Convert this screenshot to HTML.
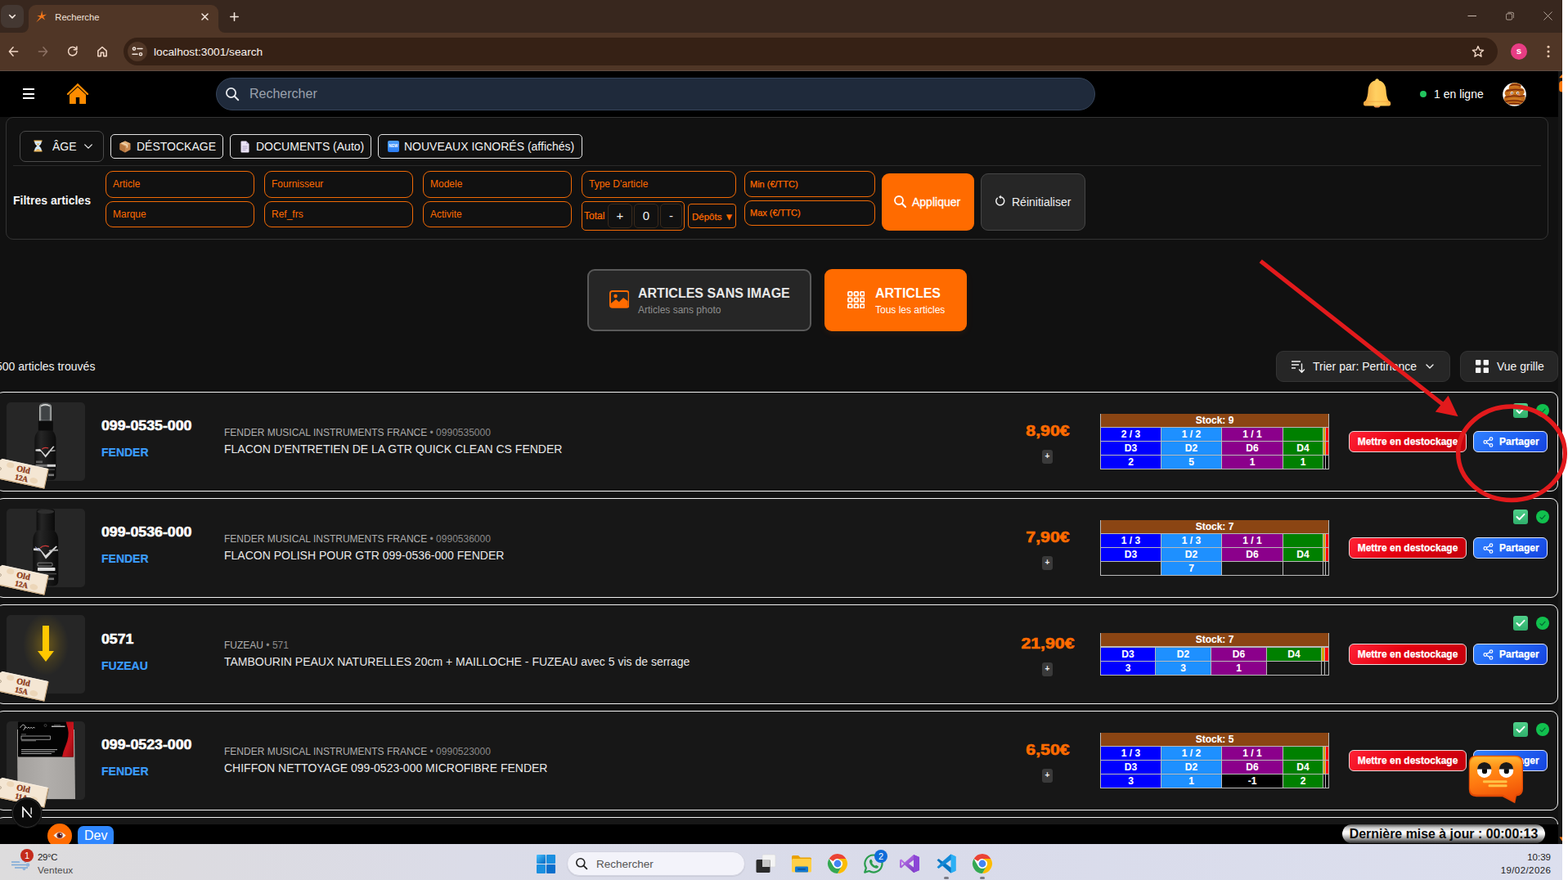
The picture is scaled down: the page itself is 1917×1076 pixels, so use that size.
<!DOCTYPE html>
<html lang="fr">
<head>
<meta charset="utf-8">
<title>Recherche</title>
<style>
*{box-sizing:border-box;margin:0;padding:0}
html,body{width:1917px;height:1076px;overflow:hidden;background:#fff}
body{font-family:"Liberation Sans",sans-serif;color:#fff;position:relative;-webkit-font-smoothing:antialiased}
.abs,.abs *{position:absolute}
#root{position:absolute;left:0;top:0;width:1917px;height:1076px;overflow:hidden}
#root div,#root span,#root svg{position:absolute;white-space:nowrap}
.t{line-height:1;}
/* chrome */
#tabstrip{left:0;top:0;width:1910px;height:40px;background:#38271e}
#toolbar{left:0;top:40px;width:1910px;height:47px;background:#503626}
#tab{left:35px;top:6px;width:232px;height:34px;background:#503626;border-radius:9px 9px 0 0}
#tabsearch{left:1px;top:6px;width:28px;height:28px;border-radius:8px;background:#443832}
#urlpill{left:151px;top:46px;width:1680px;height:34px;border-radius:17px;background:#362115}
#siteinfo{left:156px;top:51px;width:24px;height:24px;border-radius:12px;background:#503626}
/* page */
#page{left:0;top:87px;width:1905px;height:945px;background:#111}
#sbar{left:1905px;top:87px;width:5px;height:945px;background:#171717}
#hdr{left:0;top:87px;width:1905px;height:56px;background:#000}
#search{left:264px;top:95px;width:1075px;height:40px;border-radius:20px;background:#1f2a3b;border:1px solid #36445a}
#fpanel{left:7px;top:143px;width:1886px;height:150px;border:1px solid #343434;border-radius:9px;background:#111}
.chip{height:30px;top:164px;border:1px solid #e4e4e4;border-radius:5px;font-size:14px;color:#f2f2f2}
.fin{height:33px;border:1px solid #f26a05;border-radius:9px;font-size:12px;color:#ff6b00}
.fin span{left:8px;top:9px}
.card{left:-2px;width:1907px;height:122px;border:1px solid #f2f2f2;border-radius:9px;background:#171717}
.thumb{left:9px;top:12px;width:96px;height:96px;border-radius:5px;background:#262626;overflow:hidden}
.ref{left:125px;font-size:16px;font-weight:bold;color:#fff;-webkit-text-stroke:0.55px #fff;transform:scaleX(1.108);transform-origin:0 50%}
.brand{left:125px;font-size:14px;font-weight:bold;color:#3b9dff;-webkit-text-stroke:0.2px #3b9dff}
.sup{left:275px;font-size:12px;color:#b0b0b0}
.sup i{font-style:normal;color:#8a8a8a}
.desc{left:275px;font-size:14px;color:#e8e8e8}
.price{font-size:18px;font-weight:bold;color:#ff6b00;-webkit-text-stroke:0.6px #ff6b00;text-align:center;width:80px;transform:scaleX(1.183);transform-origin:50% 50%}
.plus{left:1275px;width:13px;height:17px;border-radius:3px;background:#3a3a3a;color:#eee;font-size:10px;font-weight:bold;text-align:center;line-height:15px}
.btnr{left:1650px;top:47px;width:144px;height:26px;border:1px solid #f0dada;border-radius:6px;background:linear-gradient(135deg,#ff2236 0%,#e4000f 45%,#c4000d 100%);font-size:12px;font-weight:bold;color:#fff;text-align:center;line-height:24px;-webkit-text-stroke:0.25px #fff}
.btnb{left:1802px;top:47px;width:91px;height:26px;border:1px solid #dfe6ff;border-radius:6px;background:linear-gradient(135deg,#2f80ff 0%,#2163f2 50%,#1544e0 100%);font-size:12px;font-weight:bold;color:#fff;-webkit-text-stroke:0.25px #fff}
.stk{left:1346px;width:281px;background:#b9b9b9}
.stk div{font-size:12px;font-weight:bold;color:#fff;text-align:center;line-height:16px;height:16px;-webkit-text-stroke:0.1px #fff}
.stk div.sh{height:16px;line-height:17px}
.cb{left:1852px;top:13px;width:18px;height:18px;border-radius:3px;background:linear-gradient(180deg,#4fd08a,#2fae6b)}
.ck{left:1880px;top:14px;width:16px;height:16px;border-radius:8px;background:#11c04e}
.tag{width:64px;height:25px;background:linear-gradient(180deg,#f6e9d8,#f1e1cb);border:1px solid #f4e6d2;border-right:1px solid #cdb08a;border-bottom:1.5px solid #c9a87e;border-radius:1.5px;transform:rotate(12deg);font-family:"Liberation Serif","DejaVu Serif",serif;font-weight:bold;font-size:10px;color:#8c3a1a;-webkit-text-stroke:0.35px #8c3a1a;box-shadow:0 2px 3px rgba(0,0,0,.45)}
/* taskbar */
#taskbar{left:0;top:1032px;width:1910px;height:44px;background:linear-gradient(90deg,#dddcdd 0%,#dcdbe0 12%,#dbdce8 30%,#d9dbea 60%,#dcdfee 100%)}
#taskbar .tx{font-family:"Liberation Sans",sans-serif;color:#1b1b1b}
</style>
</head>
<body>
<div id="root">
<!-- browser chrome -->
<div id="tabstrip"></div>
<div id="toolbar"></div>
<div style="left:0;top:86px;width:1910px;height:1px;background:#5e4c42"></div>
<div id="tabsearch"></div>
<svg style="left:10px;top:15.5px" width="10" height="8.4" viewBox="0 0 12 10"><path d="M2 3 L6 7 L10 3" fill="none" stroke="#f3e6dd" stroke-width="2" stroke-linecap="round" stroke-linejoin="round"/></svg>
<div id="tab"></div>
<svg style="left:27px;top:32px" width="8" height="8" viewBox="0 0 8 8"><path d="M8 0 V8 H0 A8 8 0 0 0 8 0 Z" fill="#503626"/></svg>
<svg style="left:267px;top:32px" width="8" height="8" viewBox="0 0 8 8"><path d="M0 0 V8 H8 A8 8 0 0 1 0 0 Z" fill="#503626"/></svg>
<svg style="left:42px;top:12px" width="17" height="17" viewBox="0 0 17 17"><path d="M9.3 0.8 L10.2 6.6 L15.2 5.6 L11 8.6 L13.2 12.4 L9 9.8 L2 15.6 L7 9 L3.2 7 L7.8 7 Z" fill="#f2761a"/></svg>
<span class="t" style="left:67.3px;top:15.5px;font-size:11.2px;color:#f3e4da">Recherche</span>
<svg style="left:246px;top:16px" width="9" height="9" viewBox="0 0 9 9"><path d="M1 1 L8 8 M8 1 L1 8" stroke="#f3e6dd" stroke-width="1.5" stroke-linecap="round"/></svg>
<svg style="left:281px;top:15px" width="11" height="11" viewBox="0 0 11 11"><path d="M5.5 0.8 V10.2 M0.8 5.5 H10.2" stroke="#f3e6dd" stroke-width="1.6" stroke-linecap="round"/></svg>
<!-- window controls -->
<svg style="left:1794px;top:17.8px" width="12" height="3" viewBox="0 0 12 3"><path d="M0.5 1.5 H11" stroke="#c9b9ae" stroke-width="1"/></svg>
<svg style="left:1840.5px;top:14px" width="10.5" height="10.5" viewBox="0 0 13 13"><rect x="0.5" y="3.5" width="9" height="9" rx="2" fill="none" stroke="#c9b9ae" stroke-width="1"/><path d="M3 1.5 H9.5 A2.5 2.5 0 0 1 12 4 V10" fill="none" stroke="#c9b9ae" stroke-width="1"/></svg>
<svg style="left:1886.5px;top:14.3px" width="11" height="11" viewBox="0 0 13 13"><path d="M0.5 0.5 L12.5 12.5 M12.5 0.5 L0.5 12.5" stroke="#c9b9ae" stroke-width="1"/></svg>
<!-- nav buttons -->
<svg style="left:10.3px;top:57px" width="13" height="12" viewBox="0 0 15 14"><path d="M7 1 L1.5 7 L7 13 M1.5 7 H13.5" fill="none" stroke="#f0d6c5" stroke-width="1.7" stroke-linecap="round" stroke-linejoin="round"/></svg>
<svg style="left:46.2px;top:57px" width="13" height="12" viewBox="0 0 15 14"><path d="M8 1 L13.5 7 L8 13 M13.5 7 H1.5" fill="none" stroke="#8d7264" stroke-width="1.7" stroke-linecap="round" stroke-linejoin="round"/></svg>
<svg style="left:82px;top:56.3px" width="13.5" height="13.5" viewBox="0 0 15 15"><path d="M12.6 4.6 A5.8 5.8 0 1 0 13.3 7.5" fill="none" stroke="#f0d6c5" stroke-width="1.7" stroke-linecap="round"/><path d="M13.2 1.2 V5.2 H9.2" fill="none" stroke="#f0d6c5" stroke-width="1.7" stroke-linecap="round" stroke-linejoin="round"/></svg>
<svg style="left:117.6px;top:55.6px" width="14" height="14" viewBox="0 0 15 15"><path d="M2 6.5 L7.5 1.6 L13 6.5 V13.5 H9.3 V9 H5.7 V13.5 H2 Z" fill="none" stroke="#f0d6c5" stroke-width="1.7" stroke-linejoin="round"/></svg>
<div id="urlpill"></div>
<div id="siteinfo"></div>
<svg style="left:161px;top:57px" width="14" height="12" viewBox="0 0 14 12"><circle cx="3" cy="2.6" r="1.6" fill="none" stroke="#f3e6dd" stroke-width="1.4"/><path d="M7 2.6 H13" stroke="#f3e6dd" stroke-width="1.5" stroke-linecap="round"/><circle cx="11" cy="9.2" r="1.6" fill="none" stroke="#f3e6dd" stroke-width="1.4"/><path d="M1 9.2 H7" stroke="#f3e6dd" stroke-width="1.5" stroke-linecap="round"/></svg>
<span class="t" style="left:188px;top:56.5px;font-size:13.7px;color:#fbf3ee">localhost:3001/search</span>
<svg style="left:1799px;top:55px" width="16" height="16" viewBox="0 0 16 16"><path d="M8 1.6 L9.9 6 L14.6 6.4 L11 9.5 L12.1 14.1 L8 11.6 L3.9 14.1 L5 9.5 L1.4 6.4 L6.1 6 Z" fill="none" stroke="#f0d6c5" stroke-width="1.4" stroke-linejoin="round"/></svg>
<div style="left:1847px;top:53px;width:20px;height:20px;border-radius:10px;background:#e83d84"></div>
<span class="t" style="left:1847px;top:56.5px;width:20px;text-align:center;font-size:11.5px;font-weight:bold;color:#fff">s</span>
<svg style="left:1891px;top:55px" width="4" height="16" viewBox="0 0 4 16"><circle cx="2" cy="2.3" r="1.5" fill="#f0cbb3"/><circle cx="2" cy="8" r="1.5" fill="#f0cbb3"/><circle cx="2" cy="13.7" r="1.5" fill="#f0cbb3"/></svg>
<!-- page -->
<div id="page"></div>
<div id="sbar"></div>
<div id="hdr"></div>
<!-- hamburger -->
<div style="left:28px;top:108px;width:14px;height:2px;background:#fff"></div>
<div style="left:28px;top:114px;width:14px;height:2px;background:#fff"></div>
<div style="left:28px;top:119px;width:14px;height:2px;background:#fff"></div>
<!-- home -->
<svg style="left:81px;top:100px" width="28" height="28" viewBox="0 0 28 28"><path d="M14 3.5 L2 15" stroke="#ff8c00" stroke-width="2.4" stroke-linecap="round" fill="none"/><path d="M14 3.5 L26 15" stroke="#ff8c00" stroke-width="2.4" stroke-linecap="round" fill="none"/><path d="M14 6.5 L24 15.8 V27 H16.2 V19 H11.8 V27 H4 V15.8 Z" fill="#ff8c00"/></svg>
<div id="search"></div>
<svg style="left:275px;top:106px" width="18" height="18" viewBox="0 0 18 18"><circle cx="7.5" cy="7.5" r="5.6" fill="none" stroke="#e5e7eb" stroke-width="1.8"/><path d="M11.8 11.8 L16.2 16.2" stroke="#e5e7eb" stroke-width="2" stroke-linecap="round"/></svg>
<span class="t" style="left:305px;top:107px;font-size:16px;color:#9aa1ad">Rechercher</span>
<!-- bell -->
<svg style="left:1665px;top:95px" width="38" height="40" viewBox="0 0 38 40"><defs><linearGradient id="bg1" x1="0" y1="0" x2="1" y2="0"><stop offset="0" stop-color="#f2a640"/><stop offset="0.45" stop-color="#ffd062"/><stop offset="0.8" stop-color="#ffc653"/><stop offset="1" stop-color="#f4ab45"/></linearGradient></defs><ellipse cx="18.5" cy="34" rx="4" ry="2.6" fill="#e8914a"/><path d="M18.6 1.2 C20 1.2 20.8 2.2 20.9 3.4 C26.5 4.6 29.3 9.5 29.6 15.5 C29.8 20.5 30.6 24.5 32.5 28 C33.2 28.5 35.2 29.2 35.2 31 V32.6 C35.2 33.8 34.4 34.4 33.2 34.4 H4 C2.8 34.4 2 33.8 2 32.6 V31 C2 29.2 4 28.5 4.7 28 C6.6 24.5 7.4 20.5 7.6 15.5 C7.9 9.5 10.7 4.6 16.3 3.4 C16.4 2.2 17.2 1.2 18.6 1.2 Z" fill="url(#bg1)"/><path d="M4.2 29.2 H33 " stroke="#eea03c" stroke-width="1" opacity=".7" fill="none"/></svg>
<div style="left:1736px;top:111px;width:8px;height:8px;border-radius:4px;background:#22c55e"></div>
<span class="t" style="left:1753px;top:108px;font-size:14px;color:#fff">1 en ligne</span>
<!-- avatar -->
<svg style="left:1836.5px;top:100.5px" width="29" height="29" viewBox="0 0 29 29"><defs><clipPath id="avc"><circle cx="14.5" cy="14.5" r="14.2"/></clipPath></defs><circle cx="14.5" cy="14.5" r="14.3" fill="#fff"/><g clip-path="url(#avc)"><path d="M9.5 2.5 Q14 -1.5 20.5 1.2 Q24 3.2 22 6.2 Q27 7.5 26.8 11.5 Q26.8 13.6 25 14.6 Q28.6 17 27.6 21 Q26.6 25 21.5 26.4 Q14 28.2 7 26 Q1.8 24.200000000000003 1.6 20.5 Q1.5 17.5 4 16 Q1.6 13.5 3.2 10.5 Q4.6 8 8 7.6 Q6.8 4.6 9.5 2.5 Z" fill="#c06a18"/><path d="M10 3.5 Q15 1.6 21.5 3.8 M5 10.2 Q12 7.4 24.5 9.2 M4 17.8 Q11 15.6 18 16.5 Q23 17 26.8 16 M3.2 23.2 Q12 20.6 25.5 23.4 M8 26 Q14 25 21 26.3" stroke="#7c2a0a" stroke-width="1.5" fill="none" stroke-linecap="round"/><path d="M9 5.5 Q14 4.4 19 5.4 M7 13 Q13 11.6 21 12.6 M7 20.5 Q14 19 22 20.4" stroke="#d98a2e" stroke-width="1.2" fill="none" stroke-linecap="round" opacity=".8"/><circle cx="11.4" cy="12.8" r="1.7" fill="#fff"/><circle cx="18.6" cy="12.8" r="1.7" fill="#fff"/><circle cx="11.6" cy="12.9" r="0.8" fill="#3a1a10"/><circle cx="18.8" cy="12.9" r="0.8" fill="#3a1a10"/><ellipse cx="9.6" cy="15" rx="1.3" ry="0.8" fill="#f08a8a"/><ellipse cx="20.4" cy="15" rx="1.3" ry="0.8" fill="#f08a8a"/></g></svg>
<!-- scrollbar arrows -->
<svg style="left:1905px;top:90px" width="5" height="24" viewBox="0 0 5 24"><path d="M5 1 L2.5 3.5 L1.2 5.2 H5 Z" fill="#ff7a0a"/><path d="M5 9 Q1 9 1.2 13 V19 Q1 22.5 5 22.5 Z" fill="#ff7a0a"/></svg>
<svg style="left:1905px;top:1022px" width="5" height="8" viewBox="0 0 5 8"><path d="M1.5 1.5 H5 V6.5 Z" fill="#ff7a0a"/></svg>
<!-- filter panel -->
<div id="fpanel"></div>
<div style="left:24px;top:160px;width:103px;height:38px;border:1px solid #4a4a4a;border-radius:7px"></div>
<svg style="left:41px;top:171px" width="11" height="15" viewBox="0 0 11 15"><path d="M0.5 0.5 H10.5 V2.2 H0.5 Z M0.5 12.8 H10.5 V14.5 H0.5 Z" fill="#e9b24e"/><path d="M1.5 2 H9.500000000000002 Q9.500000000000002 5.5 6.3 7.5 Q9.500000000000002 9.5 9.500000000000002 13 H1.5 Q1.5 9.5 4.7 7.5 Q1.5 5.5 1.5 2 Z" fill="#cfe9ff" stroke="#eee" stroke-width="0.6"/><path d="M2.6 13 Q5.5 9.5 8.4 13 Z M3.5 4.5 H7.5 L5.5 6.8 Z" fill="#e9a53a"/></svg>
<span class="t" style="left:64px;top:172px;font-size:14px;color:#f4f4f4">ÂGE</span>
<svg style="left:102px;top:175px" width="12" height="8" viewBox="0 0 14 9"><path d="M2 2 L7 7 L12 2" fill="none" stroke="#f1f1f1" stroke-width="1.5" stroke-linecap="round" stroke-linejoin="round"/></svg>
<div class="chip" style="left:135px;width:138px"></div>
<svg style="left:146px;top:172px" width="14" height="15" viewBox="0 0 14 15"><path d="M7 0.5 L13.5 3.5 V11 L7 14.5 L0.5 11 V3.5 Z" fill="#c98a52"/><path d="M7 0.5 L13.5 3.5 L7 6.8 L0.5 3.5 Z" fill="#e2b07a"/><path d="M7 6.8 V14.5 L0.5 11 V3.5 Z" fill="#b5763f"/><path d="M3.6 2 L10.2 5.2 V8.3 L8.6 9 V5.9 L2.2 2.7 Z" fill="#f0d9b8"/></svg>
<span class="t" style="left:167px;top:172px;font-size:14px;color:#f2f2f2">DÉSTOCKAGE</span>
<div class="chip" style="left:281px;width:173px"></div>
<svg style="left:294px;top:172px" width="11" height="15" viewBox="0 0 11 15"><path d="M0.5 1.5 Q0.5 0.5 1.5 0.5 H7 L10.5 4 V13.5 Q10.5 14.5 9.5 14.5 H1.5 Q0.5 14.5 0.5 13.5 Z" fill="#e9e2f5"/><path d="M7 0.5 L10.5 4 H7 Z" fill="#b9aed0"/><path d="M2.5 7 H8.5 M2.5 9.2 H8.5 M2.5 11.4 H6.5" stroke="#a89cc0" stroke-width="0.9"/></svg>
<span class="t" style="left:313px;top:172px;font-size:14px;color:#f2f2f2">DOCUMENTS (Auto)</span>
<div class="chip" style="left:462px;width:250px"></div>
<div style="left:474px;top:172px;width:14px;height:14px;border-radius:2px;background:linear-gradient(180deg,#4fa0ff,#2a7bf0)"></div>
<span class="t" style="left:474px;top:176.5px;width:14px;text-align:center;font-size:4.6px;font-weight:bold;color:#fff;letter-spacing:0.1px">NEW</span>
<span class="t" style="left:494px;top:172px;font-size:14px;color:#f2f2f2">NOUVEAUX IGNORÉS (affichés)</span>
<div style="left:16px;top:202px;width:1868px;height:1px;background:#2a2a2a"></div>
<span class="t" style="left:16px;top:238px;font-size:14px;font-weight:bold;color:#f5f5f5">Filtres articles</span>
<div class="fin" style="left:129px;top:209px;width:182px"><span class="t">Article</span></div>
<div class="fin" style="left:129px;top:246px;width:182px;height:32px"><span class="t">Marque</span></div>
<div class="fin" style="left:323px;top:209px;width:182px"><span class="t">Fournisseur</span></div>
<div class="fin" style="left:323px;top:246px;width:182px;height:32px"><span class="t">Ref_frs</span></div>
<div class="fin" style="left:517px;top:209px;width:182px"><span class="t">Modele</span></div>
<div class="fin" style="left:517px;top:246px;width:182px;height:32px"><span class="t">Activite</span></div>
<div class="fin" style="left:711px;top:209px;width:189px"><span class="t">Type D'article</span></div>
<div class="fin" style="left:711px;top:246px;width:126px;height:36px;border-radius:5px"><span class="t" style="left:2px;top:11px;-webkit-text-stroke:0.2px #ff6b00">Total</span></div>
<div style="left:743px;top:249px;width:30px;height:30px;border:1px solid #3a2a1c;border-radius:5px"></div>
<div style="left:775px;top:249px;width:30px;height:30px;border:1px solid #3a2a1c;border-radius:5px"></div>
<div style="left:807px;top:249px;width:27px;height:30px;border:1px solid #3a2a1c;border-radius:5px"></div>
<span class="t" style="left:743px;top:256px;width:30px;text-align:center;font-size:15px;color:#f0f0f0">+</span>
<span class="t" style="left:775px;top:256px;width:30px;text-align:center;font-size:15px;color:#f0f0f0">0</span>
<span class="t" style="left:807px;top:256px;width:27px;text-align:center;font-size:15px;color:#f0f0f0">-</span>
<div class="fin" style="left:841px;top:249px;width:59px;height:30px;border-radius:4px"><span class="t" style="left:4px;top:10px;font-size:11.5px;-webkit-text-stroke:0.25px #ff6b00">Dépôts ▼</span></div>
<div class="fin" style="left:910px;top:209px;width:160px;height:32px"><span class="t" style="left:6px;top:10px;font-size:11px;-webkit-text-stroke:0.25px #ff6b00">Min (€/TTC)</span></div>
<div class="fin" style="left:910px;top:245px;width:160px;height:31px"><span class="t" style="left:6px;top:9px;font-size:11px;-webkit-text-stroke:0.25px #ff6b00">Max (€/TTC)</span></div>
<div style="left:1078px;top:212px;width:113px;height:70px;border-radius:9px;background:#ff6b00"></div>
<svg style="left:1092px;top:238px" width="17" height="17" viewBox="0 0 17 17"><circle cx="7" cy="7" r="5" fill="none" stroke="#fff" stroke-width="1.8"/><path d="M10.8 10.8 L15 15" stroke="#fff" stroke-width="2" stroke-linecap="round"/></svg>
<span class="t" style="left:1115px;top:240px;font-size:14px;color:#fff;-webkit-text-stroke:0.3px #fff">Appliquer</span>
<div style="left:1199px;top:212px;width:128px;height:70px;border-radius:9px;background:#262626;border:1px solid #474747"></div>
<svg style="left:1215px;top:238px" width="16" height="16" viewBox="0 0 16 16"><path d="M4.3 4.2 A5 5 0 1 0 8 2.8" fill="none" stroke="#f0f0f0" stroke-width="1.5" stroke-linecap="round"/><path d="M8.6 0.6 L6 3 L8.8 5.2 Z" fill="#f0f0f0"/></svg>
<span class="t" style="left:1237px;top:240px;font-size:14px;color:#f0f0f0">Réinitialiser</span>
<!-- tabs -->
<div style="left:718px;top:329px;width:274px;height:76px;border-radius:9px;background:#262626;border:2px solid #5a5a5a"></div>
<svg style="left:744.6px;top:355.4px" width="24.6" height="21.8" viewBox="0 0 26 23"><rect x="1" y="1" width="24" height="21" rx="3" fill="none" stroke="#ff6b00" stroke-width="2"/><circle cx="8" cy="7.5" r="2.4" fill="#ff6b00"/><path d="M2 17 L8.5 11.5 L12.5 15 L18 9.5 L24 14 V21 H2 Z" fill="#ff6b00"/></svg>
<span class="t" style="left:780px;top:351px;font-size:16px;font-weight:bold;color:#e8e8e8">ARTICLES SANS IMAGE</span>
<span class="t" style="left:780px;top:373px;font-size:12px;color:#8e8e8e">Articles sans photo</span>
<div style="left:1008px;top:329px;width:174px;height:76px;border-radius:9px;background:#ff6b00;box-shadow:0 3px 8px rgba(255,107,0,.08)"></div>
<svg style="left:1035.6px;top:355.6px" width="21.6" height="21.6" viewBox="0 0 23 23"><g fill="none" stroke="#fff" stroke-width="1.9"><rect x="1" y="1" width="5" height="5" rx="1"/><rect x="9" y="1" width="5" height="5" rx="1"/><rect x="17" y="1" width="5" height="5" rx="1"/><rect x="1" y="9" width="5" height="5" rx="1"/><rect x="9" y="9" width="5" height="5" rx="1"/><rect x="17" y="9" width="5" height="5" rx="1"/><rect x="1" y="17" width="5" height="5" rx="1"/><rect x="9" y="17" width="5" height="5" rx="1"/><rect x="17" y="17" width="5" height="5" rx="1"/></g></svg>
<span class="t" style="left:1070px;top:351px;font-size:16px;font-weight:bold;color:#fff">ARTICLES</span>
<span class="t" style="left:1070px;top:373px;font-size:12px;color:#fff">Tous les articles</span>
<!-- list header -->
<span class="t" style="left:-5px;top:441px;font-size:14px;color:#f0f0f0">500 articles trouvés</span>
<div style="left:1560px;top:429px;width:213px;height:38px;border-radius:9px;background:#262626;border:1px solid #343434"></div>
<svg style="left:1578px;top:440px" width="18" height="17" viewBox="0 0 18 17"><path d="M1 2 H12 M1 6 H10 M1 10 H6" stroke="#f0f0f0" stroke-width="1.4" fill="none"/><path d="M13.5 5 V15 M10.5 12 L13.5 15.2 L16.5 12" stroke="#f0f0f0" stroke-width="1.4" fill="none" stroke-linecap="round" stroke-linejoin="round"/></svg>
<span class="t" style="left:1605px;top:441px;font-size:14px;color:#f4f4f4">Trier par: Pertinence</span>
<svg style="left:1742px;top:444px" width="12" height="8" viewBox="0 0 12 8"><path d="M2 2 L6 6 L10 2" fill="none" stroke="#f0f0f0" stroke-width="1.4" stroke-linecap="round" stroke-linejoin="round"/></svg>
<div style="left:1785px;top:429px;width:120px;height:38px;border-radius:9px;background:#262626;border:1px solid #343434"></div>
<svg style="left:1804px;top:440px" width="16" height="16" viewBox="0 0 16 16"><rect x="0" y="0" width="6.4" height="6.4" rx="0.8" fill="#f4f4f4"/><rect x="9.6" y="0" width="6.4" height="6.4" rx="0.8" fill="#f4f4f4"/><rect x="0" y="9.6" width="6.4" height="6.4" rx="0.8" fill="#f4f4f4"/><rect x="9.6" y="9.6" width="6.4" height="6.4" rx="0.8" fill="#f4f4f4"/></svg>
<span class="t" style="left:1830px;top:441px;font-size:14px;color:#f4f4f4">Vue grille</span>
<!-- cards -->
<div class="card" style="top:479px;left:-5px;width:1910px">
<div class="thumb" style="left:12px;top:12px"><svg style="left:0;top:0" width="96" height="96" viewBox="0 0 96 96"><defs><linearGradient id="bt1" x1="0" x2="1"><stop offset="0" stop-color="#101010"/><stop offset="0.3" stop-color="#262626"/><stop offset="0.6" stop-color="#1a1a1a"/><stop offset="1" stop-color="#0b0b0b"/></linearGradient><linearGradient id="cp1" x1="0" x2="1"><stop offset="0" stop-color="#c9cbc7"/><stop offset="0.18" stop-color="#5d6163"/><stop offset="0.8" stop-color="#54585a"/><stop offset="1" stop-color="#b9bbb8"/></linearGradient></defs><path d="M40 6 Q40 0.5 47.5 0.5 Q55 0.5 55 6 V23 H40 Z" fill="url(#cp1)"/><path d="M42 4.5 Q47.5 1 53 4.5" stroke="#e4e5e2" stroke-width="1.3" fill="none"/><rect x="42.5" y="5" width="10" height="16" rx="1.5" fill="#3f4345"/><rect x="38.8" y="22.5" width="18" height="12.5" rx="1" fill="#0c0c0c"/><path d="M39 34.5 Q34.3 39 34.3 46 V90 Q34.3 95 40 95 H55 Q60.5 95 60.5 90 V46 Q60.5 39 56 34.5 Z" fill="url(#bt1)"/><path d="M35.5 57.5 L41 57 L47.5 64.5 L57 53.5 L58.5 54 L47.7 67.5 L42 60 L35.5 59.5 Z" fill="#d8d8d8"/><path d="M52 59 L59.5 58.2 L59.5 59.6 L51 60.2 Z" fill="#bdbdbd"/><path d="M43.2 57.3 q3 -3.2 8 -1.2" stroke="#d23a3a" stroke-width="1.1" fill="none"/><rect x="36" y="71.5" width="8" height="2.6" fill="#6d6d6d" opacity=".8"/><rect x="35.5" y="75.8" width="14" height="3" fill="#6f6f6f"/><rect x="49.5" y="75.8" width="10.5" height="3" fill="#cfcfcf"/><rect x="44" y="81.5" width="15" height="1.4" fill="#4a4a4a"/><rect x="51" y="87.5" width="7" height="2.6" fill="#777"/></svg></div>
<span class="t ref" style="left:128px;top:33px">099-0535-000</span>
<span class="t brand" style="left:128px;top:66px">FENDER</span>
<span class="t sup" style="left:278px;top:43px">FENDER MUSICAL INSTRUMENTS FRANCE <i>• 0990535000</i></span>
<span class="t desc" style="left:278px;top:62px">FLACON D'ENTRETIEN DE LA GTR QUICK CLEAN CS FENDER</span>
<span class="t price" style="left:1245px;top:38px">8,90€</span>
<div class="plus" style="left:1278px;top:70px">+</div>
<div class="stk" style="left:1349px;top:26px;width:280px;height:68px">
<div class="sh" style="left:1px;top:0;width:278px;background:#8b4513">Stock: 9</div>
<div style="left:1px;top:17px;width:73px;background:#0000ff">2 / 3</div>
<div style="left:75px;top:17px;width:73px;background:#1e90ff">1 / 2</div>
<div style="left:149px;top:17px;width:74px;background:#8b008b">1 / 1</div>
<div style="left:224px;top:17px;width:48px;background:#008000"></div>
<div style="left:273px;top:17px;width:2px;background:#cfa900"></div>
<div style="left:276px;top:17px;width:3px;background:#ff0000"></div>
<div style="left:1px;top:34px;width:73px;background:#0000ff">D3</div>
<div style="left:75px;top:34px;width:73px;background:#1e90ff">D2</div>
<div style="left:149px;top:34px;width:74px;background:#8b008b">D6</div>
<div style="left:224px;top:34px;width:48px;background:#008000">D4</div>
<div style="left:273px;top:34px;width:2px;background:#cfa900"></div>
<div style="left:276px;top:34px;width:3px;background:#ff0000"></div>
<div style="left:1px;top:51px;width:73px;background:#0000ff">2</div>
<div style="left:75px;top:51px;width:73px;background:#1e90ff">5</div>
<div style="left:149px;top:51px;width:74px;background:#8b008b">1</div>
<div style="left:224px;top:51px;width:48px;background:#008000">1</div>
<div style="left:273px;top:51px;width:2px;background:#000000"></div>
<div style="left:276px;top:51px;width:3px;background:#000000"></div>
</div>
<div class="btnr" style="left:1653px">Mettre en destockage</div>
<div class="btnb" style="left:1805px"><svg style="left:11px;top:6px" width="13" height="13" viewBox="0 0 13 13"><g fill="none" stroke="#fff" stroke-width="1.2"><circle cx="10" cy="2.6" r="1.8"/><circle cx="2.8" cy="6.5" r="1.8"/><circle cx="10" cy="10.4" r="1.8"/><path d="M4.4 5.6 L8.4 3.5 M4.4 7.4 L8.4 9.5"/></g></svg><span class="t" style="left:31px;top:6px">Partager</span></div>
<div class="cb" style="left:1854px"><svg style="left:3px;top:4px" width="12" height="10" viewBox="0 0 12 10"><path d="M1.5 5 L4.6 8 L10.5 1.8" fill="none" stroke="#fff" stroke-width="1.9" stroke-linecap="round" stroke-linejoin="round"/></svg></div>
<div class="ck" style="left:1882px"><svg style="left:4px;top:4.5px" width="8" height="7" viewBox="0 0 8 7"><path d="M1 3.6 L3 5.6 L7 1.2" fill="none" stroke="#063" stroke-width="1.2" stroke-linecap="round" stroke-linejoin="round"/></svg></div>
<svg class="tagsvg" style="left:-8px;top:72px" width="80" height="54" viewBox="-12 552 80 54"><g transform="translate(25.3 578.6) rotate(12.2)"><path d="M-25 -11 H33 V14 H-25 L-31 8 V-5 Z" fill="#000" opacity=".35"/><path d="M-26 -12.5 H32 V12.5 H-26 L-32 6.5 V-6.5 Z" fill="#f4e6d3"/><path d="M-32 6.5 L-26 12 H32 V-12" fill="none" stroke="#c9a87e" stroke-width="1.2"/><path d="M-26 -12.1 H31.5" fill="none" stroke="#fbf3e8" stroke-width="0.8"/><ellipse cx="-14.4" cy="-7" rx="4.6" ry="3.4" fill="#ecd6b8"/><ellipse cx="17.5" cy="5.6" rx="5" ry="3.6" fill="#ecd6b8"/><ellipse cx="-26.3" cy="0" rx="1.9" ry="1.6" fill="#e6dac9" stroke="#a08d75" stroke-width="0.7"/><text x="2.3" y="-1.6" text-anchor="middle" font-family="Liberation Serif, DejaVu Serif, serif" font-weight="bold" font-size="10.2" fill="#8c3a1a" stroke="#8c3a1a" stroke-width="0.35">Old</text><text x="2.2" y="8.8" text-anchor="middle" font-family="Liberation Serif, DejaVu Serif, serif" font-weight="bold" font-size="9.4" fill="#8c3a1a" stroke="#8c3a1a" stroke-width="0.35">12A</text></g></svg>
</div>
<div class="card" style="top:609px;left:-5px;width:1910px">
<div class="thumb" style="left:12px;top:12px"><svg style="left:0;top:0" width="96" height="96" viewBox="0 0 96 96"><defs><linearGradient id="bt2" x1="0" x2="1"><stop offset="0" stop-color="#0e0e0e"/><stop offset="0.28" stop-color="#262626"/><stop offset="0.6" stop-color="#191919"/><stop offset="1" stop-color="#0a0a0a"/></linearGradient></defs><path d="M36.6 4 Q36.6 0.3 41 0.3 H54.5 Q59 0.3 59 4 V27 H36.6 Z" fill="url(#bt2)"/><ellipse cx="47.8" cy="3.6" rx="10.4" ry="2.6" fill="#2e2e2e"/><path d="M37.5 26.5 Q32.3 31 32.3 39 V88 Q32.3 94.5 39 94.5 H56.5 Q63.3 94.5 63.3 88 V39 Q63.3 31 58 26.5 Z" fill="url(#bt2)"/><path d="M33 48.5 L40 48 L47.7 57 L60.5 45.5 L62 46.2 L48 61.5 L41.5 51.5 L33 51 Z" fill="#d8d8d8"/><path d="M52.5 50.5 L63 49.8 L63 51.4 L51.5 52 Z" fill="#b5b5b5"/><path d="M35 46.5 L41.5 52" stroke="#8a90c8" stroke-width="1"/><path d="M41.3 48 q4 -4.2 10.5 -1.6" stroke="#d23a3a" stroke-width="1.2" fill="none"/><rect x="38" y="66.2" width="18" height="4" rx="1" fill="none" stroke="#9a9a9a" stroke-width="0.8"/><rect x="38" y="72" width="21.5" height="4" rx="0.8" fill="#dcdcdc"/><rect x="44" y="79" width="17" height="1.3" fill="#4c4c4c"/><rect x="51" y="84.5" width="7" height="2.6" fill="#777"/></svg></div>
<span class="t ref" style="left:128px;top:33px">099-0536-000</span>
<span class="t brand" style="left:128px;top:66px">FENDER</span>
<span class="t sup" style="left:278px;top:43px">FENDER MUSICAL INSTRUMENTS FRANCE <i>• 0990536000</i></span>
<span class="t desc" style="left:278px;top:62px">FLACON POLISH POUR GTR 099-0536-000 FENDER</span>
<span class="t price" style="left:1245px;top:38px">7,90€</span>
<div class="plus" style="left:1278px;top:70px">+</div>
<div class="stk" style="left:1349px;top:26px;width:280px;height:68px">
<div class="sh" style="left:1px;top:0;width:278px;background:#8b4513">Stock: 7</div>
<div style="left:1px;top:17px;width:73px;background:#0000ff">1 / 3</div>
<div style="left:75px;top:17px;width:73px;background:#1e90ff">1 / 3</div>
<div style="left:149px;top:17px;width:74px;background:#8b008b">1 / 1</div>
<div style="left:224px;top:17px;width:48px;background:#008000"></div>
<div style="left:273px;top:17px;width:2px;background:#cfa900"></div>
<div style="left:276px;top:17px;width:3px;background:#ff0000"></div>
<div style="left:1px;top:34px;width:73px;background:#0000ff">D3</div>
<div style="left:75px;top:34px;width:73px;background:#1e90ff">D2</div>
<div style="left:149px;top:34px;width:74px;background:#8b008b">D6</div>
<div style="left:224px;top:34px;width:48px;background:#008000">D4</div>
<div style="left:273px;top:34px;width:2px;background:#cfa900"></div>
<div style="left:276px;top:34px;width:3px;background:#ff0000"></div>
<div style="left:1px;top:51px;width:73px;background:#171717"></div>
<div style="left:75px;top:51px;width:73px;background:#1e90ff">7</div>
<div style="left:149px;top:51px;width:74px;background:#171717"></div>
<div style="left:224px;top:51px;width:48px;background:#171717"></div>
<div style="left:273px;top:51px;width:2px;background:#171717"></div>
<div style="left:276px;top:51px;width:3px;background:#171717"></div>
</div>
<div class="btnr" style="left:1653px">Mettre en destockage</div>
<div class="btnb" style="left:1805px"><svg style="left:11px;top:6px" width="13" height="13" viewBox="0 0 13 13"><g fill="none" stroke="#fff" stroke-width="1.2"><circle cx="10" cy="2.6" r="1.8"/><circle cx="2.8" cy="6.5" r="1.8"/><circle cx="10" cy="10.4" r="1.8"/><path d="M4.4 5.6 L8.4 3.5 M4.4 7.4 L8.4 9.5"/></g></svg><span class="t" style="left:31px;top:6px">Partager</span></div>
<div class="cb" style="left:1854px"><svg style="left:3px;top:4px" width="12" height="10" viewBox="0 0 12 10"><path d="M1.5 5 L4.6 8 L10.5 1.8" fill="none" stroke="#fff" stroke-width="1.9" stroke-linecap="round" stroke-linejoin="round"/></svg></div>
<div class="ck" style="left:1882px"><svg style="left:4px;top:4.5px" width="8" height="7" viewBox="0 0 8 7"><path d="M1 3.6 L3 5.6 L7 1.2" fill="none" stroke="#063" stroke-width="1.2" stroke-linecap="round" stroke-linejoin="round"/></svg></div>
<svg class="tagsvg" style="left:-8px;top:72px" width="80" height="54" viewBox="-12 552 80 54"><g transform="translate(25.3 578.6) rotate(12.2)"><path d="M-25 -11 H33 V14 H-25 L-31 8 V-5 Z" fill="#000" opacity=".35"/><path d="M-26 -12.5 H32 V12.5 H-26 L-32 6.5 V-6.5 Z" fill="#f4e6d3"/><path d="M-32 6.5 L-26 12 H32 V-12" fill="none" stroke="#c9a87e" stroke-width="1.2"/><path d="M-26 -12.1 H31.5" fill="none" stroke="#fbf3e8" stroke-width="0.8"/><ellipse cx="-14.4" cy="-7" rx="4.6" ry="3.4" fill="#ecd6b8"/><ellipse cx="17.5" cy="5.6" rx="5" ry="3.6" fill="#ecd6b8"/><ellipse cx="-26.3" cy="0" rx="1.9" ry="1.6" fill="#e6dac9" stroke="#a08d75" stroke-width="0.7"/><text x="2.3" y="-1.6" text-anchor="middle" font-family="Liberation Serif, DejaVu Serif, serif" font-weight="bold" font-size="10.2" fill="#8c3a1a" stroke="#8c3a1a" stroke-width="0.35">Old</text><text x="2.2" y="8.8" text-anchor="middle" font-family="Liberation Serif, DejaVu Serif, serif" font-weight="bold" font-size="9.4" fill="#8c3a1a" stroke="#8c3a1a" stroke-width="0.35">12A</text></g></svg>
</div>
<div class="card" style="top:739px;left:-5px;width:1910px">
<div class="thumb" style="left:12px;top:12px"><svg style="left:0;top:0" width="96" height="96" viewBox="0 0 96 96"><defs><radialGradient id="gl" cx="0.5" cy="0.5" r="0.5"><stop offset="0" stop-color="#ffc400" stop-opacity=".32"/><stop offset="0.6" stop-color="#ffc400" stop-opacity=".1"/><stop offset="1" stop-color="#ffc400" stop-opacity="0"/></radialGradient></defs><ellipse cx="48" cy="36" rx="28" ry="38" fill="url(#gl)"/><path d="M44 13 H52 V44 H58 L48 57 L38 44 H44 Z" fill="#ffc800"/></svg></div>
<span class="t ref" style="left:128px;top:34px">0571</span>
<span class="t brand" style="left:128px;top:67px">FUZEAU</span>
<span class="t sup" style="left:278px;top:43px">FUZEAU <i>• 571</i></span>
<span class="t desc" style="left:278px;top:62px">TAMBOURIN PEAUX NATURELLES 20cm + MAILLOCHE - FUZEAU avec 5 vis de serrage</span>
<span class="t price" style="left:1245px;top:38px">21,90€</span>
<div class="plus" style="left:1278px;top:70px">+</div>
<div class="stk" style="left:1349px;top:34px;width:280px;height:52px">
<div class="sh" style="left:1px;top:0;width:278px;background:#8b4513">Stock: 7</div>
<div style="left:1px;top:18px;width:66px;background:#0000ff">D3</div>
<div style="left:68px;top:18px;width:67px;background:#1e90ff">D2</div>
<div style="left:136px;top:18px;width:67px;background:#8b008b">D6</div>
<div style="left:204px;top:18px;width:66px;background:#008000">D4</div>
<div style="left:271px;top:18px;width:3px;background:#cfa900"></div>
<div style="left:275px;top:18px;width:4px;background:#ff0000"></div>
<div style="left:1px;top:35px;width:66px;background:#0000ff">3</div>
<div style="left:68px;top:35px;width:67px;background:#1e90ff">3</div>
<div style="left:136px;top:35px;width:67px;background:#8b008b">1</div>
<div style="left:204px;top:35px;width:66px;background:#171717"></div>
<div style="left:271px;top:35px;width:3px;background:#171717"></div>
<div style="left:275px;top:35px;width:4px;background:#171717"></div>
</div>
<div class="btnr" style="left:1653px">Mettre en destockage</div>
<div class="btnb" style="left:1805px"><svg style="left:11px;top:6px" width="13" height="13" viewBox="0 0 13 13"><g fill="none" stroke="#fff" stroke-width="1.2"><circle cx="10" cy="2.6" r="1.8"/><circle cx="2.8" cy="6.5" r="1.8"/><circle cx="10" cy="10.4" r="1.8"/><path d="M4.4 5.6 L8.4 3.5 M4.4 7.4 L8.4 9.5"/></g></svg><span class="t" style="left:31px;top:6px">Partager</span></div>
<div class="cb" style="left:1854px"><svg style="left:3px;top:4px" width="12" height="10" viewBox="0 0 12 10"><path d="M1.5 5 L4.6 8 L10.5 1.8" fill="none" stroke="#fff" stroke-width="1.9" stroke-linecap="round" stroke-linejoin="round"/></svg></div>
<div class="ck" style="left:1882px"><svg style="left:4px;top:4.5px" width="8" height="7" viewBox="0 0 8 7"><path d="M1 3.6 L3 5.6 L7 1.2" fill="none" stroke="#063" stroke-width="1.2" stroke-linecap="round" stroke-linejoin="round"/></svg></div>
<svg class="tagsvg" style="left:-8px;top:72px" width="80" height="54" viewBox="-12 552 80 54"><g transform="translate(25.3 578.6) rotate(12.2)"><path d="M-25 -11 H33 V14 H-25 L-31 8 V-5 Z" fill="#000" opacity=".35"/><path d="M-26 -12.5 H32 V12.5 H-26 L-32 6.5 V-6.5 Z" fill="#f4e6d3"/><path d="M-32 6.5 L-26 12 H32 V-12" fill="none" stroke="#c9a87e" stroke-width="1.2"/><path d="M-26 -12.1 H31.5" fill="none" stroke="#fbf3e8" stroke-width="0.8"/><ellipse cx="-14.4" cy="-7" rx="4.6" ry="3.4" fill="#ecd6b8"/><ellipse cx="17.5" cy="5.6" rx="5" ry="3.6" fill="#ecd6b8"/><ellipse cx="-26.3" cy="0" rx="1.9" ry="1.6" fill="#e6dac9" stroke="#a08d75" stroke-width="0.7"/><text x="2.3" y="-1.6" text-anchor="middle" font-family="Liberation Serif, DejaVu Serif, serif" font-weight="bold" font-size="10.2" fill="#8c3a1a" stroke="#8c3a1a" stroke-width="0.35">Old</text><text x="2.2" y="8.8" text-anchor="middle" font-family="Liberation Serif, DejaVu Serif, serif" font-weight="bold" font-size="9.4" fill="#8c3a1a" stroke="#8c3a1a" stroke-width="0.35">15A</text></g></svg>
</div>
<div class="card" style="top:869px;left:-5px;width:1910px">
<div class="thumb" style="left:12px;top:12px"><svg style="left:0;top:0" width="96" height="96" viewBox="0 0 96 96"><defs><linearGradient id="cl" x1="0" y1="0" x2="1" y2="0"><stop offset="0" stop-color="#a3a09d"/><stop offset="0.5" stop-color="#b1aeab"/><stop offset="1" stop-color="#a6a3a0"/></linearGradient><linearGradient id="rd" x1="0" y1="0" x2="1" y2="1"><stop offset="0" stop-color="#a80d14"/><stop offset="0.6" stop-color="#c9141d"/><stop offset="1" stop-color="#8e0a10"/></linearGradient></defs><path d="M13 10 H83 L84 95 H13.5 Z" fill="url(#cl)"/><rect x="14" y="0.6" width="68" height="43" rx="0.8" fill="#030303"/><path d="M72.6 0.6 H81.2 Q82 0.6 82 1.4 V42.8 Q82 43.6 81.2 43.6 H68 Q69 37 72.5 29 Q77 18 75 9 Z" fill="url(#rd)"/><path d="M16.5 8 q4 -7 6.5 -1.5 q-1 3 -2.5 4.500000000000001 M22 8.5 q2 -3 3.5 0 q1.500000000000001 -3.000000000000001 3 0 q1.5 -2.5 3 0 q1.5 -2 3.2 -0.5" stroke="#d8d8d8" stroke-width="0.8" fill="none"/><circle cx="47.5" cy="5" r="1.5" fill="none" stroke="#7d7d7d" stroke-width="0.5"/><rect x="55" y="5.6" width="16.5" height="1.3" fill="#cfcfcf"/><rect x="58" y="4" width="8" height="0.6" fill="#777"/><rect x="18" y="15.5" width="6" height="0.8" fill="#777"/><rect x="18" y="18" width="35.5" height="4.2" fill="none" stroke="#cfcfcf" stroke-width="0.7"/><rect x="18" y="23.4" width="18" height="0.8" fill="#999"/><rect x="18" y="34.2" width="44" height="0.9" fill="#bdbdbd"/><rect x="18" y="36.6" width="41" height="0.9" fill="#bdbdbd"/><rect x="18" y="39" width="37" height="0.9" fill="#bdbdbd"/></svg></div>
<span class="t ref" style="left:128px;top:33px">099-0523-000</span>
<span class="t brand" style="left:128px;top:66px">FENDER</span>
<span class="t sup" style="left:278px;top:43px">FENDER MUSICAL INSTRUMENTS FRANCE <i>• 0990523000</i></span>
<span class="t desc" style="left:278px;top:62px">CHIFFON NETTOYAGE 099-0523-000 MICROFIBRE FENDER</span>
<span class="t price" style="left:1245px;top:38px">6,50€</span>
<div class="plus" style="left:1278px;top:70px">+</div>
<div class="stk" style="left:1349px;top:26px;width:280px;height:68px">
<div class="sh" style="left:1px;top:0;width:278px;background:#8b4513">Stock: 5</div>
<div style="left:1px;top:17px;width:73px;background:#0000ff">1 / 3</div>
<div style="left:75px;top:17px;width:73px;background:#1e90ff">1 / 2</div>
<div style="left:149px;top:17px;width:74px;background:#8b008b">1 / 1</div>
<div style="left:224px;top:17px;width:48px;background:#008000"></div>
<div style="left:273px;top:17px;width:2px;background:#cfa900"></div>
<div style="left:276px;top:17px;width:3px;background:#ff0000"></div>
<div style="left:1px;top:34px;width:73px;background:#0000ff">D3</div>
<div style="left:75px;top:34px;width:73px;background:#1e90ff">D2</div>
<div style="left:149px;top:34px;width:74px;background:#8b008b">D6</div>
<div style="left:224px;top:34px;width:48px;background:#008000">D4</div>
<div style="left:273px;top:34px;width:2px;background:#cfa900"></div>
<div style="left:276px;top:34px;width:3px;background:#ff0000"></div>
<div style="left:1px;top:51px;width:73px;background:#0000ff">3</div>
<div style="left:75px;top:51px;width:73px;background:#1e90ff">1</div>
<div style="left:149px;top:51px;width:74px;background:#000000">-1</div>
<div style="left:224px;top:51px;width:48px;background:#008000">2</div>
<div style="left:273px;top:51px;width:2px;background:#000000"></div>
<div style="left:276px;top:51px;width:3px;background:#000000"></div>
</div>
<div class="btnr" style="left:1653px">Mettre en destockage</div>
<div class="btnb" style="left:1805px"><svg style="left:11px;top:6px" width="13" height="13" viewBox="0 0 13 13"><g fill="none" stroke="#fff" stroke-width="1.2"><circle cx="10" cy="2.6" r="1.8"/><circle cx="2.8" cy="6.5" r="1.8"/><circle cx="10" cy="10.4" r="1.8"/><path d="M4.4 5.6 L8.4 3.5 M4.4 7.4 L8.4 9.5"/></g></svg><span class="t" style="left:31px;top:6px">Partager</span></div>
<div class="cb" style="left:1854px"><svg style="left:3px;top:4px" width="12" height="10" viewBox="0 0 12 10"><path d="M1.5 5 L4.6 8 L10.5 1.8" fill="none" stroke="#fff" stroke-width="1.9" stroke-linecap="round" stroke-linejoin="round"/></svg></div>
<div class="ck" style="left:1882px"><svg style="left:4px;top:4.5px" width="8" height="7" viewBox="0 0 8 7"><path d="M1 3.6 L3 5.6 L7 1.2" fill="none" stroke="#063" stroke-width="1.2" stroke-linecap="round" stroke-linejoin="round"/></svg></div>
<svg class="tagsvg" style="left:-8px;top:72px" width="80" height="54" viewBox="-12 552 80 54"><g transform="translate(25.3 578.6) rotate(12.2)"><path d="M-25 -11 H33 V14 H-25 L-31 8 V-5 Z" fill="#000" opacity=".35"/><path d="M-26 -12.5 H32 V12.5 H-26 L-32 6.5 V-6.5 Z" fill="#f4e6d3"/><path d="M-32 6.5 L-26 12 H32 V-12" fill="none" stroke="#c9a87e" stroke-width="1.2"/><path d="M-26 -12.1 H31.5" fill="none" stroke="#fbf3e8" stroke-width="0.8"/><ellipse cx="-14.4" cy="-7" rx="4.6" ry="3.4" fill="#ecd6b8"/><ellipse cx="17.5" cy="5.6" rx="5" ry="3.6" fill="#ecd6b8"/><ellipse cx="-26.3" cy="0" rx="1.9" ry="1.6" fill="#e6dac9" stroke="#a08d75" stroke-width="0.7"/><text x="2.3" y="-1.6" text-anchor="middle" font-family="Liberation Serif, DejaVu Serif, serif" font-weight="bold" font-size="10.2" fill="#8c3a1a" stroke="#8c3a1a" stroke-width="0.35">Old</text><text x="2.2" y="8.8" text-anchor="middle" font-family="Liberation Serif, DejaVu Serif, serif" font-weight="bold" font-size="9.4" fill="#8c3a1a" stroke="#8c3a1a" stroke-width="0.35">11A</text></g></svg>
</div>
<div class="card" style="top:999px;left:-5px;width:1910px">
</div>
<!-- bottom bar -->
<div style="left:0;top:1008px;width:1905px;height:24px;background:#000"></div>
<div style="left:1905px;top:1008px;width:5px;height:24px;background:#171717"></div>
<svg style="left:1905px;top:1022px" width="5" height="8" viewBox="0 0 5 8"><path d="M1.5 1.5 H5 V6.5 Z" fill="#ff7a0a"/></svg>
<!-- next badge -->
<div style="left:15.2px;top:975.6px;width:36px;height:36px;border-radius:18px;background:#0a0a0a;border:1px solid #2e2e2e;box-shadow:0 0 0 1px #111"></div>
<svg style="left:25.6px;top:986.4px" width="15" height="15" viewBox="0 0 15 15"><path d="M2 13.5 V1.5 L12.5 13.5" fill="none" stroke="#fff" stroke-width="1.7" stroke-linejoin="miter"/><path d="M12.2 1.5 V9.5" stroke="#ddd" stroke-width="1.5"/></svg>
<!-- eye -->
<div style="left:58px;top:1007px;width:30px;height:30px;border-radius:15px;background:#ff6b00"></div>
<svg style="left:65px;top:1016px" width="16" height="11" viewBox="0 0 16 11"><path d="M0.5 5.5 Q8 -2.5 15.5 5.5 Q8 13.5 0.5 5.5 Z" fill="#f3efe9"/><circle cx="8" cy="5.5" r="3.6" fill="#7a3030"/><circle cx="8" cy="5.5" r="1.7" fill="#2a1010"/><circle cx="9.2" cy="4.3" r="0.9" fill="#fff"/></svg>
<div style="left:95px;top:1010px;width:44px;height:26px;border-radius:7px;background:#2f87ff"></div>
<span class="t" style="left:103px;top:1014px;font-size:16px;color:#fff">Dev</span>
<!-- last update -->
<div style="left:1641px;top:1008px;width:248px;height:23px;border-radius:11.5px;background:linear-gradient(180deg,#5a5a5a 0%,#c9c9c9 18%,#fdfdfd 38%,#f2f2f2 52%,#9a9a9a 76%,#2e2e2e 100%);"></div>
<span class="t" style="left:1641px;top:1012px;width:248px;text-align:center;font-size:15.9px;font-weight:bold;color:#0a0a0a">Dernière mise à jour : 00:00:13</span>
<!-- mascot -->
<svg style="left:1795px;top:923.4px" width="69" height="60" viewBox="0 0 69 60"><defs><linearGradient id="ms" x1="0.3" y1="0" x2="0.6" y2="1"><stop offset="0" stop-color="#ffa21c"/><stop offset="0.5" stop-color="#ff7a10"/><stop offset="1" stop-color="#ee4e06"/></linearGradient><linearGradient id="ms2" x1="0" y1="0" x2="0" y2="1"><stop offset="0" stop-color="#ffc440" stop-opacity=".75"/><stop offset="1" stop-color="#ff9a20" stop-opacity="0"/></linearGradient></defs><path d="M10 0.8 H57.5 Q67 0.8 67 10 V42 Q67 49.5 59 50.6 L57.2 59.2 L42 51.2 H10 Q0.8 51.2 0.8 42 V10 Q0.8 0.8 10 0.8 Z" fill="#e24a06"/><path d="M10.5 1.8 H57 Q65.8 1.8 65.8 10.5 V40.3 Q65.8 47.6 58 48.4 L56 57.2 L42.3 48.8 H10.5 Q2 48.8 2 40.3 V10.5 Q2 1.8 10.5 1.8 Z" fill="url(#ms)"/><path d="M11 3 H56.5 Q64.5 3 64.5 11 V19 H3.3 V11 Q3.3 3 11 3 Z" fill="url(#ms2)"/><circle cx="19.7" cy="19.2" r="8.7" fill="#fff"/><circle cx="46.5" cy="19.2" r="8.7" fill="#fff"/><path d="M11 17.6 A8.7 8.7 0 0 1 28.4 17.6 Z" fill="#1a1a1a"/><path d="M37.8 17.6 A8.7 8.7 0 0 1 55.2 17.6 Z" fill="#1a1a1a"/><path d="M17 17.3 H23 V20.4 Q23 23 20 23 Q17 23 17 20.4 Z" fill="#000"/><path d="M43.8 17.3 H49.8 V20.4 Q49.8 23 46.8 23 Q43.8 23 43.8 20.4 Z" fill="#000"/><rect x="18" y="31.3" width="29.6" height="3" rx="1.2" fill="#ffc347"/><rect x="24.6" y="36.3" width="23" height="3" rx="1.2" fill="#ffc347"/></svg>
<!-- annotation -->
<svg style="left:0;top:0" width="1917" height="1076" viewBox="0 0 1917 1076"><path d="M1541.2 319.2 L1766 496" stroke="#e21a1c" stroke-width="5.2" fill="none"/><path d="M1782.6 509.2 L1754.8 503.6 L1770.6 483.8 Z" fill="#e21a1c"/><ellipse cx="1848" cy="554.3" rx="65.3" ry="57.2" fill="none" stroke="#e21a1c" stroke-width="5.5"/></svg>
<!-- taskbar -->
<div id="taskbar"></div>
<svg style="left:13px;top:1049px" width="26" height="18" viewBox="0 0 26 18"><path d="M1 5 H19 M1 8.5 H23 M5 12 H21" stroke="#7aa7d6" stroke-width="1.3" fill="none"/><circle cx="21" cy="8.5" r="2.3" fill="#8fb4dc"/><circle cx="16.5" cy="13.5" r="1.8" fill="#8fb4dc"/><circle cx="14" cy="3" r="3.5" fill="#c9d9ee"/></svg>
<div style="left:25px;top:1038px;width:16px;height:16px;border-radius:8px;background:#c42b1c"></div>
<span class="t tx" style="left:25px;top:1040.5px;width:16px;text-align:center;font-size:11px;color:#fff !important">1</span>
<span class="t tx" style="left:46px;top:1043px;font-size:11.3px;letter-spacing:-0.3px;color:#1b1b1b">29°C</span>
<span class="t tx" style="left:46px;top:1059px;font-size:11.8px;letter-spacing:0.1px;color:#4a4a4a">Venteux</span>
<!-- windows logo -->
<svg style="left:656px;top:1045px" width="23" height="23" viewBox="0 0 23 23"><defs><linearGradient id="wl" x1="0" y1="0" x2="1" y2="1"><stop offset="0" stop-color="#4cc2ff"/><stop offset="1" stop-color="#0067c0"/></linearGradient></defs><rect x="0" y="0" width="11" height="11" rx="1" fill="url(#wl)"/><rect x="12" y="0" width="11" height="11" rx="1" fill="#1a8fe0"/><rect x="0" y="12" width="11" height="11" rx="1" fill="#1a8fe0"/><rect x="12" y="12" width="11" height="11" rx="1" fill="#0a6fcc"/></svg>
<div style="left:693px;top:1041px;width:218px;height:30px;border-radius:15px;background:#f3f3fa;border:1px solid #d4d5e2;box-shadow:0 1px 1px rgba(0,0,0,.08)"></div>
<svg style="left:703px;top:1048px" width="16" height="16" viewBox="0 0 16 16"><circle cx="6.8" cy="6.8" r="5" fill="none" stroke="#222" stroke-width="1.6"/><path d="M10.6 10.6 L14.4 14.4" stroke="#222" stroke-width="1.8" stroke-linecap="round"/></svg>
<span class="t tx" style="left:729px;top:1049.5px;font-size:13.5px;color:#555">Rechercher</span>
<!-- task view -->
<svg style="left:924px;top:1044px" width="25" height="24" viewBox="0 0 25 24"><rect x="8" y="1" width="16" height="15" rx="1.5" fill="#f4f4f4" stroke="#d8d8d8" stroke-width="0.6"/><rect x="0.5" y="7" width="17" height="16" rx="1.5" fill="#2b2b2b"/><rect x="8" y="7" width="9.5" height="9" fill="#c9c9c9"/></svg>
<!-- folder -->
<svg style="left:967px;top:1045px" width="26" height="22" viewBox="0 0 26 22"><path d="M1 2.5 Q1 1 2.5 1 H9 L11.5 3.5 H23.5 Q25 3.5 25 5 V8 H1 Z" fill="#e9a100"/><rect x="1" y="5" width="24" height="16.5" rx="1.5" fill="#ffcf48"/><rect x="5" y="14.5" width="16" height="7" rx="1.2" fill="#1278d0"/><rect x="8" y="17" width="10" height="1.6" rx="0.8" fill="#0a4f94"/></svg>
<!-- chrome -->
<svg style="left:1011px;top:1043px" width="26" height="26" viewBox="0 0 26 26"><circle cx="13" cy="13" r="12" fill="#fff"/><path d="M13 1 A12 12 0 0 1 23.4 7 H13 A6 6 0 0 0 7.8 10 L2.6 7 A12 12 0 0 1 13 1 Z" fill="#ea4335"/><path d="M23.4 7 A12 12 0 0 1 13 25 L18.2 16 A6 6 0 0 0 18.2 10 L13 7 Z" fill="#fbbc04"/><path d="M2.6 7 L7.8 16 A6 6 0 0 0 18.2 16 L13 25 A12 12 0 0 1 2.6 7 Z" fill="#34a853"/><circle cx="13" cy="13" r="5.6" fill="#fff"/><circle cx="13" cy="13" r="4.4" fill="#4285f4"/></svg>
<!-- whatsapp -->
<svg style="left:1055px;top:1043px" width="26" height="26" viewBox="0 0 26 26"><path d="M13 2.5 A10.5 10.5 0 1 1 7.6 22.0 L2.2 23.6 L3.9 18.4 A10.5 10.5 0 0 1 13 2.5 Z" fill="none" stroke="#2a9d4e" stroke-width="2.2" stroke-linejoin="round"/><path d="M9 8 q1.2 -0.8 1.8 0.4 l0.9 2 q0.3 0.8 -0.6 1.5 q1.2 2.6 3.9 3.8 q0.8 -1.2 1.6 -0.8 l2 1 q0.9 0.5 0.2 1.7 q-1.3 1.8 -3.6 1 q-5.4 -1.9 -7.2 -7.400000000000001 q-0.5 -2 1 -3.2 z" fill="#2a9d4e"/></svg>
<div style="left:1069px;top:1039px;width:16px;height:16px;border-radius:8px;background:#0f6cd9"></div>
<span class="t tx" style="left:1069px;top:1041.5px;width:16px;text-align:center;font-size:11px;color:#fff !important">2</span>
<!-- visual studio -->
<svg style="left:1099px;top:1044px" width="26" height="24" viewBox="0 0 26 24"><defs><linearGradient id="vs" x1="0" y1="0" x2="1" y2="1"><stop offset="0" stop-color="#c97df2"/><stop offset="1" stop-color="#6b2fb5"/></linearGradient></defs><path d="M18 1 L25 4 V20 L18 23 L7 13.5 L3 17.5 L1 16.5 V7.5 L3 6.5 L7 10.5 Z" fill="url(#vs)"/><path d="M18 7.5 V16.5 L12 12 Z" fill="#dcdeec"/><path d="M3.2 9.5 V14.5 L6 12 Z" fill="#dcdeec"/><path d="M18 1 L25 4 V20 L18 23 Z" fill="#8b45d6"/></svg>
<!-- vscode -->
<svg style="left:1144px;top:1043px" width="26" height="26" viewBox="0 0 26 26"><path d="M18.5 1.5 L24.5 4.2 V21.8 L18.5 24.5 L5 13 Z" fill="#1f9cf0"/><path d="M18.5 1.5 L24.5 4.2 V21.8 L18.5 24.5 Z" fill="#2bb0f5"/><path d="M1.5 8.8 L3.6 7 L18.5 18 V24.5 Z" fill="#0a74c0"/><path d="M1.5 17.2 L3.6 19 L18.5 8 V1.5 Z" fill="#1589d6"/><path d="M18.5 8.5 V17.5 L12.4 13 Z" fill="#dcdeec"/></svg>
<svg style="left:1188px;top:1043px" width="26" height="26" viewBox="0 0 26 26"><circle cx="13" cy="13" r="12" fill="#fff"/><path d="M13 1 A12 12 0 0 1 23.4 7 H13 A6 6 0 0 0 7.8 10 L2.6 7 A12 12 0 0 1 13 1 Z" fill="#ea4335"/><path d="M23.4 7 A12 12 0 0 1 13 25 L18.2 16 A6 6 0 0 0 18.2 10 L13 7 Z" fill="#fbbc04"/><path d="M2.6 7 L7.8 16 A6 6 0 0 0 18.2 16 L13 25 A12 12 0 0 1 2.6 7 Z" fill="#34a853"/><circle cx="13" cy="13" r="5.6" fill="#fff"/><circle cx="13" cy="13" r="4.4" fill="#4285f4"/></svg>
<div style="left:1154px;top:1072px;width:6px;height:3px;border-radius:1.5px;background:#7a7a84"></div>
<div style="left:1198px;top:1072px;width:6px;height:3px;border-radius:1.5px;background:#7a7a84"></div>
<span class="t tx" style="left:1796px;top:1043px;width:100px;text-align:right;font-size:11.5px;color:#1b1b1b">10:39</span>
<span class="t tx" style="left:1796px;top:1059px;width:100.4px;text-align:right;font-size:11.5px;letter-spacing:0.42px;color:#1b1b1b">19/02/2026</span>
</div>
</body>
</html>
